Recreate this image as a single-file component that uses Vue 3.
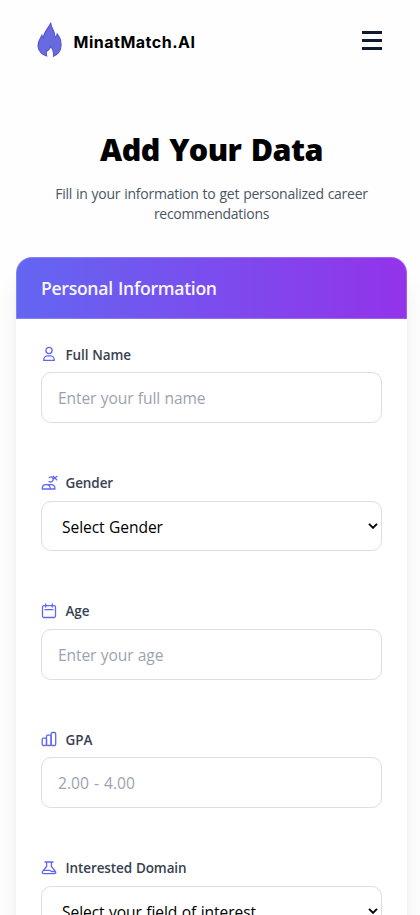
<script setup>
import { ref } from 'vue'

const fields = [
  { id: 'name', label: 'Full Name', type: 'input', hint: 'Enter your full name' },
  { id: 'gender', label: 'Gender', type: 'select', hint: 'Select Gender' },
  { id: 'age', label: 'Age', type: 'input', hint: 'Enter your age' },
  { id: 'gpa', label: 'GPA', type: 'input', hint: '2.00 - 4.00' },
  { id: 'domain', label: 'Interested Domain', type: 'select', hint: 'Select your field of interest' },
]
const values = ref({ name: '', gender: '', age: '', gpa: '', domain: '' })
</script>

<template>
  <div class="page">
    <header class="nav">
      <a class="brand">
        <svg class="flame" viewBox="0 0 24 34">
          <path d="M13.400.6C12.500 4.500 17.600 8.500 17.500 15.200C18.600 14.300 19.300 12.900 19.400 11.600C22.200 15 23.600 19 23.200 23.300C22.800 28.300 19.600 31.700 15.800 33.300C16.500 29.800 15.800 26.800 13 23.400C13 26.200 11.500 26.500 10.600 27.600C10.200 28.500 9.500 28.200 9 28C8.800 30 8.800 31.500 9.300 33C5.500 32.300 1.500 29 .9 24C.3 19 3.200 15.800 4.600 12.800C4.800 14 5.200 14.800 6 15.600C6.400 9.500 10.800 6.500 13.400.6Z" fill="#686be0" stroke="#5450cf" stroke-width="1" />
        </svg>
        <span class="brand-name">MinatMatch.AI</span>
      </a>
      <button class="burger" aria-label="Menu"><i></i><i></i><i></i></button>
    </header>

    <section class="intro">
      <h1>Add Your Data</h1>
      <p><span class="l1">Fill in your information to get personalized career</span><br /><span class="l2">recommendations</span></p>
    </section>

    <section class="card">
      <div class="card-head"><h2>Personal Information</h2></div>
      <form class="card-body">
        <div v-for="f in fields" :key="f.id" class="group">
          <label class="label" :for="f.id">
            <svg class="icon" viewBox="0 0 16 16">
              <template v-if="f.id === 'name'">
                <circle cx="8" cy="4.500" r="3.100" />
                <path d="M2.700 14.400C2.700 11.800 4.300 9.800 6.200 9.800H9.800C11.700 9.800 13.300 11.800 13.300 14.400Z" />
              </template>
              <template v-else-if="f.id === 'gender'">
                <path d="M1.200 14C1.200 11.500 2.700 9.700 4.700 9.700H10C12.500 9.700 14 11.500 14 14ZM6 9.700C8 10 9.200 11.500 9.300 14" />
                <path d="M8.200 2.500C10 1.200 12.300 2.300 12.200 4.400C12.100 6.600 9.800 7.700 8 6.500M12.200 4.200L16 1.300M12.200 1.300L15.700 4.700" />
              </template>
              <template v-else-if="f.id === 'age'">
                <rect x="1.500" y="2.700" width="13" height="11.800" rx="1.500" />
                <path d="M4.700 1V4M11.300 1V4M4 6.700H12" />
              </template>
              <template v-else-if="f.id === 'gpa'">
                <rect x="1.200" y="7.200" width="4.300" height="7.300" rx="1.200" />
                <rect x="5.500" y="4.200" width="4.600" height="10.300" rx="1.200" />
                <rect x="10.100" y="1.500" width="4.600" height="13" rx="1.300" />
              </template>
              <template v-else>
                <path d="M4 2H12M5.600 2V6.500L1.600 11.300C.8 12.500 1.400 13.600 2.700 13.600H13.300C14.600 13.600 15.200 12.500 14.400 11.300L10.400 6.500V2M3 10.400H9L10.500 11.500H14" />
              </template>
            </svg>
            <span>{{ f.label }}</span>
          </label>
          <input v-if="f.type === 'input'" :id="f.id" v-model="values[f.id]" :class="['field', 'in-' + f.id]" :placeholder="f.hint" />
          <div v-else class="select-wrap">
            <select :id="f.id" v-model="values[f.id]" class="field">
              <option value="">{{ f.hint }}</option>
            </select>
            <svg class="chevron" viewBox="0 0 10 6"><path d="M1 .8L5 4.800L9 .8" /></svg>
          </div>
        </div>
      </form>
    </section>
  </div>
</template>

<style>
body { background: #fff; overflow: hidden; }
</style>

<style scoped>
.page {
  box-sizing: border-box;
  height: 915px;
  overflow: hidden;
  background: #fefefe;
  font-family: "Open Sans", "Noto Sans", sans-serif;
  color: #000;
}
.nav {
  display: flex;
  align-items: center;
  justify-content: space-between;
  height: 80px;
  padding: 0 38px 0 37px;
  box-sizing: border-box;
}
.brand { display: flex; align-items: center; gap: 11.500px; }
.flame { width: 25px; height: 35px; margin-top: -2px; }
.brand-name {
  font: 700 16px/24px Inter, sans-serif;
  letter-spacing: 0.500px;
  margin-top: 4px;
  white-space: nowrap;
}
.burger {
  display: flex;
  flex-direction: column;
  gap: 5px;
  width: 20px;
  padding: 0;
  border: 0;
  background: none;
}
.burger i { height: 3px; background: #101a2e; }
.intro { height: 177px; box-sizing: border-box; padding: 49px 0 0 3px; text-align: center; }
h1 { margin: 0; font-size: 30.500px; line-height: 40px; font-weight: 800; letter-spacing: -0.550px; word-spacing: 2px; }
p { margin: 15px 0 0; font-size: 14px; line-height: 20px; color: #4b5563; }
.l1 { letter-spacing: -0.260px; word-spacing: 0.600px; }
.l2 { letter-spacing: -0.300px; }
.card {
  width: 390.500px;
  height: 760px;
  margin-left: 16px;
  border-radius: 16px;
  background: #fff;
  box-shadow: 0 20px 25px -5px rgba(0, 0, 0, 0.1), 0 8px 10px -6px rgba(0, 0, 0, 0.1);
}
.card-head {
  box-sizing: border-box;
  height: 62px;
  padding: 0 24px;
  display: flex;
  align-items: center;
  border: 1px solid rgba(255, 255, 255, 0.2);
  border-radius: 16px 16px 0 0;
  background: linear-gradient(90deg, #6366f1, #9333ea) border-box;
}
h2 { margin: 0; font-size: 17.600px; line-height: 28px; font-weight: 600; color: #f7f5ff; letter-spacing: -0.300px; word-spacing: 1px; }
.card-body { padding: 26.150px 24.500px 0 25px; }
.group { height: 128.400px; }
.label {
  display: flex;
  align-items: center;
  gap: 8.500px;
  height: 20px;
  margin-bottom: 7px;
  font-size: 13.500px;
  font-weight: 600;
  color: #374151;
  letter-spacing: -0.100px;
  word-spacing: 0.500px;
}
.label span { margin-top: -1px; }
.icon { width: 16px; height: 16px; margin-top: -2px; overflow: visible; fill: none; stroke: #6366f1; stroke-width: 1.300; stroke-linecap: round; stroke-linejoin: round; }
.field {
  display: block;
  box-sizing: border-box;
  width: 100%;
  height: 51px;
  margin: 0;
  padding: 1px 16px 0;
  border: 1px solid #dcdee3;
  border-radius: 10px;
  background: #fff;
  font-family: inherit;
  font-size: 15.600px;
  letter-spacing: -0.120px;
  word-spacing: 0.500px;
  color: #000;
  outline: none;
}
.field::placeholder { color: #9ca3af; opacity: 1; }
.in-gpa { letter-spacing: 0; word-spacing: 1px; }
.select-wrap { position: relative; }
.select-wrap .field { appearance: none; height: 50px; padding: 2px 20px 0; letter-spacing: -0.080px; }
.chevron { position: absolute; right: 4px; top: 22px; width: 10px; height: 6px; fill: none; stroke: #000; stroke-width: 1.900; }
</style>
